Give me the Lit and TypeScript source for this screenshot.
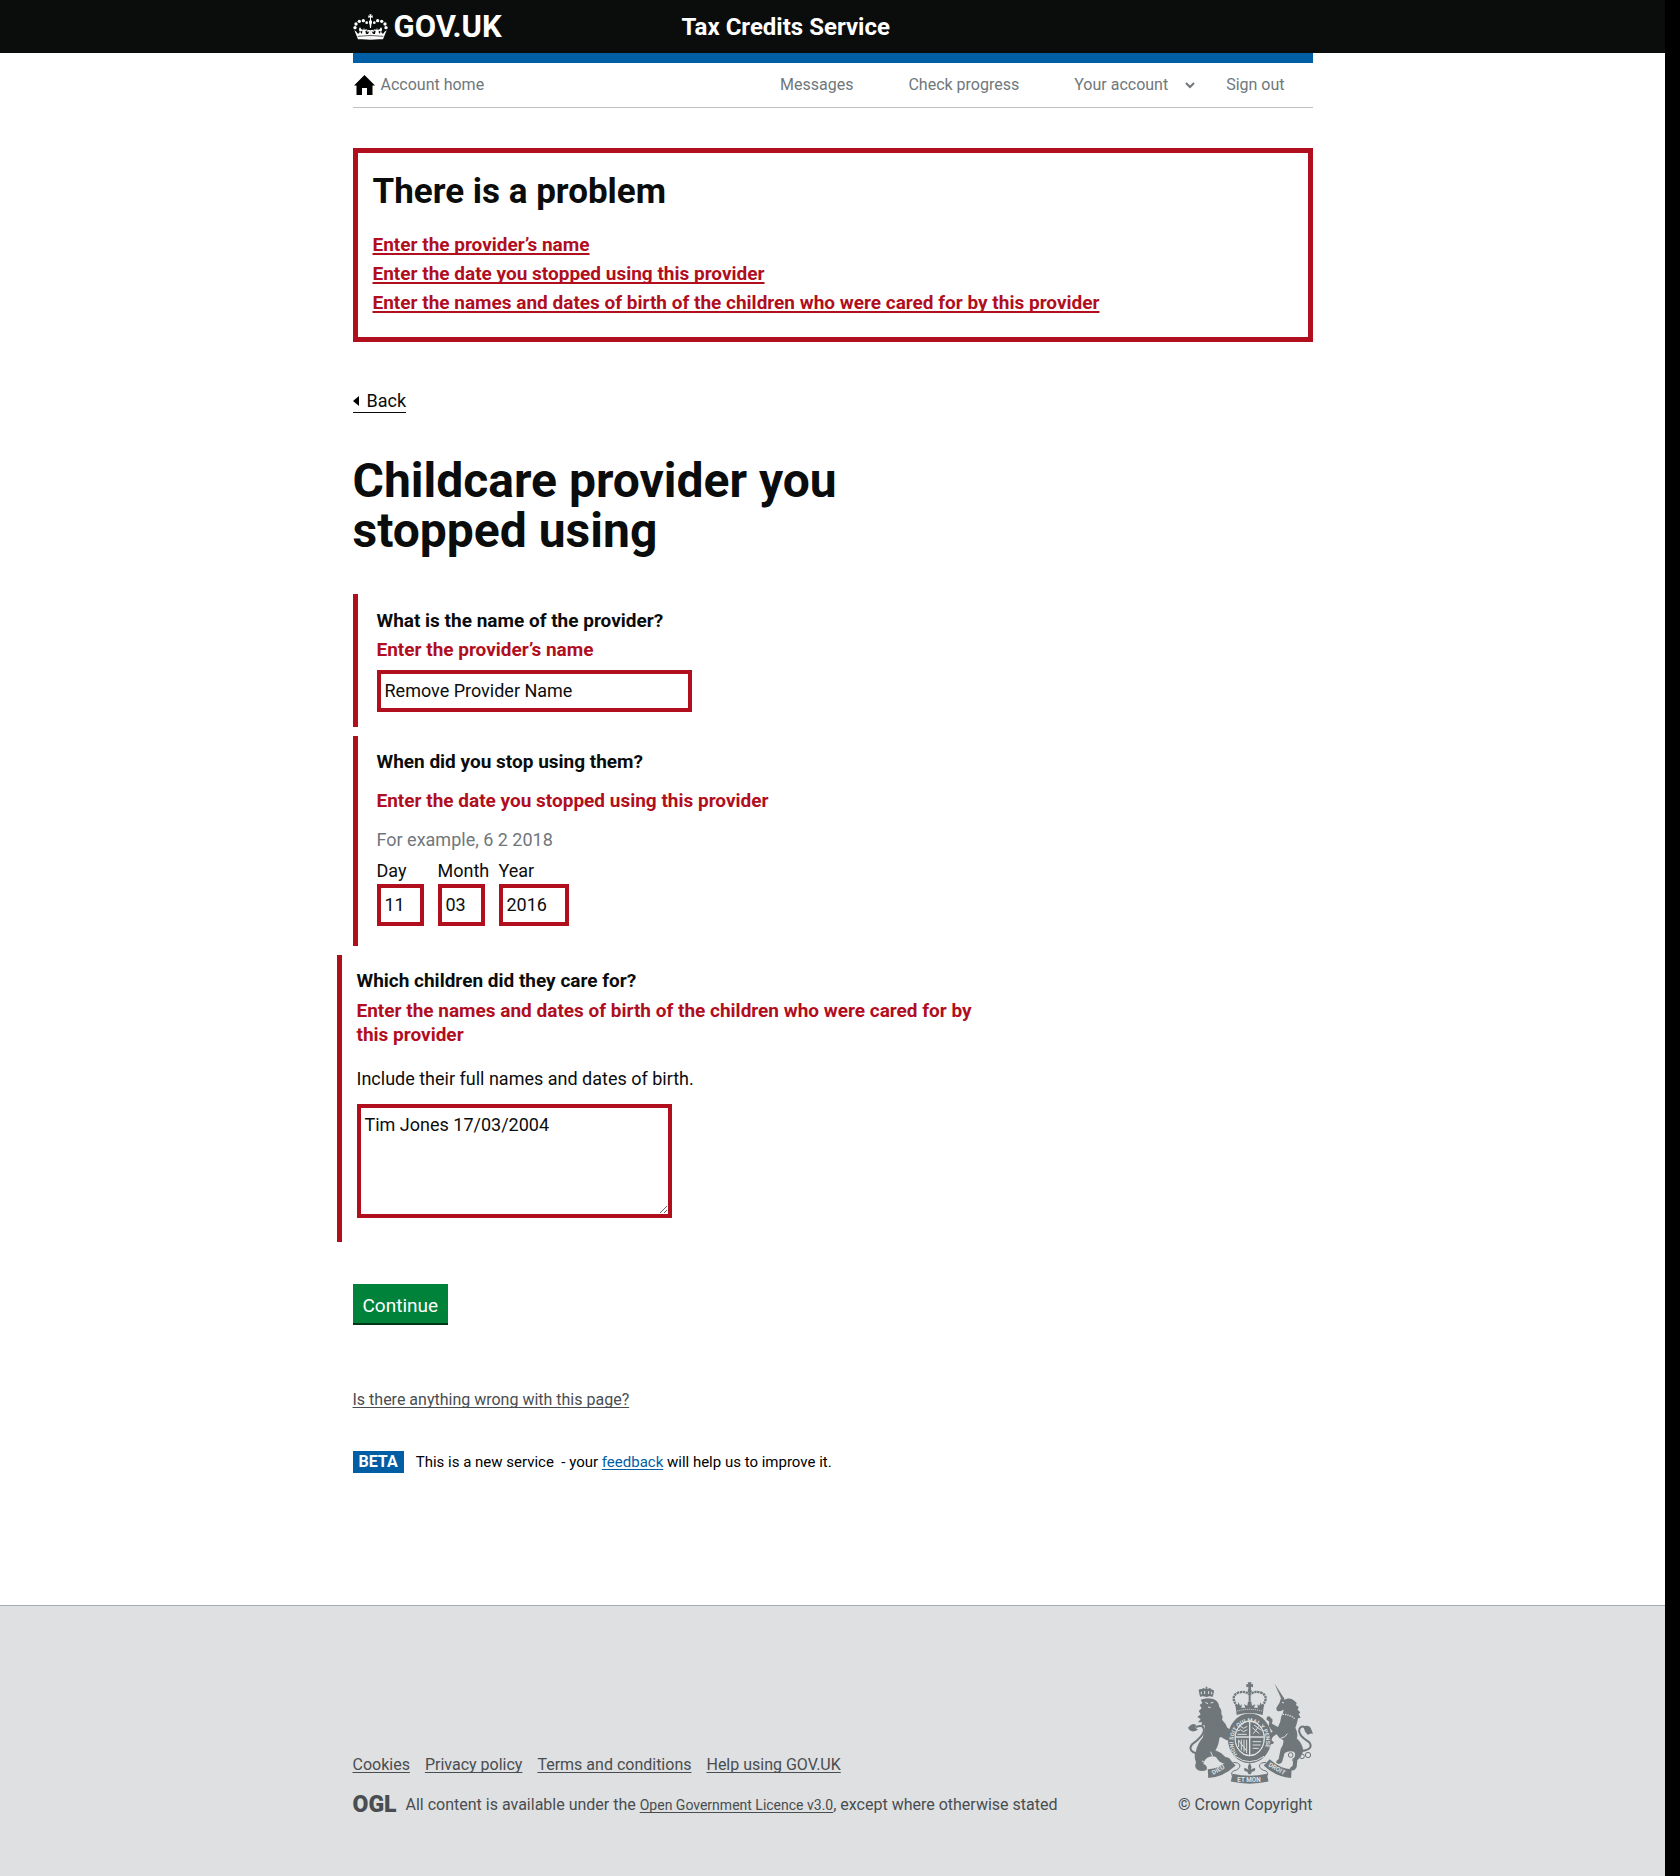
import { LitElement, html, svg, css } from "lit";
import { customElement, state } from "lit/decorators.js";

const providerNameError = "Enter the provider’s name";
const dateError = "Enter the date you stopped using this provider";
const childrenError =
  "Enter the names and dates of birth of the children who were cared for by this provider";

const errors = [
  { href: "#provider-name", text: providerNameError },
  { href: "#day", text: dateError },
  { href: "#children", text: childrenError },
];

const dateParts = [
  { id: "day", label: "Day", value: "11", size: "short" },
  { id: "month", label: "Month", value: "03", size: "short" },
  { id: "year", label: "Year", value: "2016", size: "long" },
];

const footerLinks = ["Cookies", "Privacy policy", "Terms and conditions", "Help using GOV.UK"];

/* Each half of the crown is drawn once and mirrored about its centre line. */
const crownHalf = svg`
  <circle cx="45" cy="79" r="5"/><circle cx="48" cy="68" r="5"/>
  <circle cx="58" cy="60" r="5"/><circle cx="70" cy="58" r="5"/>
  <circle cx="80" cy="64" r="4"/>
  <path d="M43 87 Q50 90 54 98 L60 92 Q54 84 60 78 Q66 84 61 92 L66 98 L67 88 L63 90 V83 L70 86 L72 79 L74 86 L80 83 V90 L76 88 L78 98 L84 98 L88 90 L82 93 V85 L92 87 V115 Q70 113 54 114 Z"/>`;

const crown = html`
  <svg class="crown" viewBox="39 38 105 78" aria-hidden="true">
    <g fill="#fff">
      <path d="M88 39 H95 L93 44 L98 42 V50 L93 48 V56 L96 60 Q97 66 94 70 L93 80 H90 L89 70 Q86 66 87 60 L90 56 V48 L85 50 V42 L90 44 Z"/>
      ${crownHalf}
      <g transform="matrix(-1 0 0 1 183 0)">${crownHalf}</g>
    </g>
    <path d="M53 105 Q91 100 130 105" fill="none" stroke="#0b0c0c" stroke-width="2"/>
  </svg>`;

const home = html`
  <svg class="home" viewBox="0 0 21 20" aria-hidden="true">
    <path d="M10.500 0 L21 10.500 H18.500 V20 H13 V13 H8 V20 H2.500 V10.500 H0 Z"/>
  </svg>`;

const chevron = html`
  <svg class="chevron" viewBox="0 0 10 7" aria-hidden="true">
    <path d="M1 1 L5 5 L9 1" fill="none" stroke="#6f777b" stroke-width="2"/>
  </svg>`;

const backArrow = html`
  <svg class="arrow" viewBox="0 0 6 10" aria-hidden="true"><path d="M6 0 V10 L0 5 Z"/></svg>`;

const royalArms = html`
  <svg class="arms" viewBox="24 18 375 309" aria-hidden="true">
    <g fill="#6f777b">
      <!-- lion -->
      <path d="M80 66 Q70 62 60 65 L56 46 Q59 40 64 43 L70 39 L77 42 V35 H82 V42 L90 39 L96 44 Q103 43 102 50 L98 66 Q90 62 80 66 Z"/>
      <path d="M62 74 Q79 66 100 72 Q116 78 118 96 Q126 104 124 118 Q130 124 126 134 Q138 146 142 158 Q156 164 155 176 L150 190 L138 183 Q126 178 118 190 Q116 212 106 226 Q124 232 136 246 Q152 248 152 258 Q146 270 134 266 Q118 264 108 246 Q94 240 82 248 Q72 254 70 266 Q84 272 80 284 Q66 292 52 284 Q42 278 48 262 Q40 244 48 228 Q52 206 68 188 Q76 170 74 150 L64 154 L66 142 L54 142 L62 132 L52 126 L62 118 L56 108 L65 100 L59 90 L67 84 Z"/>
      <path d="M118 148 Q140 160 152 176 L158 196 L140 196 L112 180 Z"/>
      <path d="M24 158 Q36 142 48 150 Q44 160 54 164 Q40 172 34 168 Q28 168 24 158 Z"/>
      <!-- unicorn -->
      <path d="M283 25 L311 68 L304 72 Z"/>
      <path d="M302 72 L310 66 L314 74 Q330 66 344 78 L350 84 L348 90 L356 96 L353 104 L361 112 L356 118 L362 128 L354 130 Q350 150 346 158 Q356 176 350 190 Q366 204 370 226 Q366 244 352 256 L350 276 Q342 292 328 284 Q330 276 338 272 L340 252 Q350 240 342 230 Q326 226 314 234 L306 262 Q296 272 288 262 Q290 256 296 252 L302 222 Q312 210 310 196 Q296 190 290 178 Q276 184 274 196 L282 202 Q278 212 268 204 L262 190 Q266 176 278 170 L266 154 L268 140 L260 134 Q258 124 268 124 L278 134 L276 146 L294 156 Q302 142 304 124 Q312 112 310 104 Q300 110 292 108 Q286 102 292 94 Q300 84 302 72 Z"/>
      <path d="M370 156 Q384 148 392 158 L399 176 Q388 174 384 180 Q374 172 370 156 Z"/>
      <!-- crown -->
      <path d="M203 22 H215 L213 28 L219 27 V37 L213 35 V42 Q218 48 212 54 V80 H206 V54 Q200 48 205 42 V35 L199 37 V27 L205 28 Z"/>
      <path d="M166 88 L172 92 L176 82 L180 92 L186 88 L184 98 H196 L192 88 L202 92 L204 80 H214 L216 92 L226 88 L222 98 H234 L232 88 L238 92 L242 82 L246 92 L252 88 L248 120 Q209 108 170 120 Z"/>
      <path d="M209 264 Q218 276 212 284 L224 278 Q230 288 216 290 L212 298 H206 L202 290 Q188 288 194 278 L206 284 Q200 276 209 264 Z"/>
    </g>
    <g fill="none" stroke="#6f777b">
      <!-- tails and crown arches -->
      <path stroke-width="6" d="M52 236 Q22 228 36 208 Q70 184 72 166 Q70 146 48 156"/>
      <path stroke-width="6" d="M366 228 Q402 222 388 202 Q352 180 358 162 Q366 148 380 160"/>
      <path stroke-width="7" stroke-dasharray="7 2" d="M172 94 Q150 66 172 54 Q194 46 207 58 M246 94 Q268 66 246 54 Q224 46 211 58"/>
      <ellipse cx="209" cy="190" rx="55" ry="64" stroke-width="21"/>
      <g stroke-width="3">
        <circle cx="332" cy="240" r="7"/><circle cx="344" cy="255" r="6"/>
        <circle cx="366" cy="244" r="7"/><circle cx="384" cy="240" r="8"/>
      </g>
      <!-- ribbon -->
      <path stroke-width="3" d="M160 262 Q176 262 180 270 Q180 284 160 288 Q152 292 156 302 M258 262 Q242 262 238 270 Q238 284 258 288 Q266 292 262 302"/>
      <path stroke-width="26" d="M84 296 Q124 294 158 262"/>
      <path stroke-width="26" d="M334 296 Q294 294 260 262"/>
      <path stroke-width="24" d="M155 308 Q209 320 263 308"/>
    </g>
    <ellipse cx="209" cy="190" rx="42" ry="50" fill="#6f777b"/>
    <g fill="none" stroke="#dee0e2">
      <ellipse cx="209" cy="190" rx="44" ry="52" stroke-width="3"/>
      <path stroke-width="4" d="M209 140 V240 M167 186 H251"/>
      <path stroke-width="3" d="M174 158 L182 154 L190 160 L202 154 M172 168 L182 164 L190 170 L202 164 M172 178 H200 M217 158 L238 176 M222 150 L244 166 M236 154 L220 176 M218 200 H244 M218 210 H242 M218 220 H236 M176 194 V216 M184 194 V226 M192 194 V230 M200 194 V234 M176 196 L200 228"/>
      <path stroke-width="3" stroke-dasharray="3 3" d="M172 108 Q209 98 246 108"/>
      <path stroke-width="3" d="M76 82 L84 86 M92 84 L100 82 M84 96 L92 98 M64 50 V58 M74 48 V57 M86 48 V57 M95 50 V58"/>
      <path stroke-width="4" stroke-dasharray="4 3" d="M308 118 Q330 118 346 132"/>
      <path stroke-width="3" d="M306 82 L312 84 M74 262 L66 258 M98 244 L92 230 M302 190 Q316 188 322 176"/>
      <path stroke-width="3" d="M166 244 Q209 276 252 244"/>
    </g>
    <g fill="#dee0e2" class="motto">
      <path id="garter" fill="none" d="M172 238 A49 58 0 1 1 246 238"/>
      <text class="small"><textPath href="#garter">HONI SOIT QUI MAL Y PENSE</textPath></text>
      <text x="100" y="300" transform="rotate(-30 100 300)">DIEU</text>
      <text x="172" y="321">ET MON</text>
      <text x="264" y="273" transform="rotate(30 264 273)">DROIT</text>
    </g>
  </svg>`;

@customElement("app-root")
export class AppRoot extends LitElement {
  @state() private providerName = "Remove Provider Name";
  @state() private childDetails = "Tim Jones 17/03/2004";

  static styles = css`
    :host {
      display: grid;
      grid-template-columns: minmax(0, 1fr) 15px;
      min-height: 100vh;
      background: #000;
      color: #0b0c0c;
      font-family: Roboto, "Liberation Sans", sans-serif;
      font-size: 18px;
      line-height: 24px;
    }
    * { box-sizing: border-box; }
    h1, h2, p, ul { margin: 0; padding: 0; }
    ul { list-style: none; }
    svg { display: block; flex: none; }
    a { color: inherit; text-decoration-skip-ink: none; text-underline-offset: 2px; }

    .page { display: flex; flex-direction: column; background: #fff; }
    .wrap { width: 100%; max-width: 960px; margin: 0 auto; }

    .header { background: #0b0c0c; color: #fff; }
    .header .wrap { display: grid; grid-template-columns: 329px 1fr; align-items: center; height: 53px; }
    .header a { color: #fff; text-decoration: none; font-weight: 700; }
    .logo { display: flex; align-items: center; gap: 6px; font-size: 31px; }
    .crown { width: 35px; height: 26px; }
    .service { font-size: 24px; }

    .nav {
      display: flex; align-items: center; gap: 55px;
      height: 55px; padding-right: 28px;
      border-top: 10px solid #005ea5; border-bottom: 1px solid #bfc1c3;
      font-size: 16px; color: #6f777b;
    }
    .nav a { text-decoration: none; }
    .account-home { display: flex; align-items: center; gap: 6px; margin-right: auto; padding-left: 1px; }
    .home { width: 21px; height: 20px; fill: #000; }
    .menu { display: flex; align-items: center; gap: 17px; margin-right: -24px; }
    .chevron { width: 10px; height: 7px; }

    .summary { margin-top: 40px; padding: 16px 15px 22px; border: 5px solid #b10e1e; }
    .summary h2 { margin-bottom: 19px; font-size: 35px; line-height: 45px; }
    .summary ul { display: grid; gap: 5px; }
    .summary a { color: #b10e1e; font-size: 19px; font-weight: 700; text-decoration-thickness: 2px; }

    .back {
      display: inline-flex; align-items: center; gap: 8px;
      margin-top: 49px; padding-bottom: 1px;
      border-bottom: 1px solid #0b0c0c;
      line-height: 20px; text-decoration: none;
    }
    .arrow { width: 6px; height: 10px; }
    h1 { max-width: 640px; margin: 43px 0 38px; font-size: 48px; line-height: 50px; }

    .group { max-width: 640px; margin-bottom: 9px; border-left: 5px solid #b10e1e; padding: 15px 0 15px 19px; }
    .label, .error { display: block; font-size: 19px; font-weight: 700; }
    .error { color: #b10e1e; margin-top: 5px; }
    .date { padding: 14px 0 20px 19px; }
    .date .error, .date .hint { margin-top: 15px; }
    .hint { color: #6f777b; }
    .box {
      display: block; border: 4px solid #b10e1e; border-radius: 0; background: #fff;
      padding: 5px 4px; color: #0b0c0c; font: inherit; outline: 0;
    }
    input.box { height: 42px; margin-top: 8px; padding: 4px 4px 6px; }
    .wide { width: 315px; }
    .parts { display: flex; gap: 14px; margin-top: 7px; }
    .part { display: flex; flex-direction: column; gap: 1px; }
    .part input.box { margin: 0; }
    .part.short, .short .box { width: 47px; }
    .long .box { width: 70px; }
    .children { margin: 0 0 42px -16px; padding: 14px 0 24px 15px; }
    .children .error { margin-top: 6px; }
    .children .note { margin: 20px 0 13px; }
    .area { height: 114px; resize: both; }

    .continue {
      display: block; border: 0; padding: 10px 10px 5px; margin-bottom: 67px;
      background: #00823b; box-shadow: 0 2px 0 #003618; color: #fff;
      font: inherit; font-size: 19px; cursor: pointer;
    }
    .report { display: block; width: fit-content; font-size: 16px; line-height: 20px; color: #494d50; }
    .phase { display: flex; align-items: center; gap: 12px; margin: 41px 0 132px; font-size: 15px; line-height: 22px; color: #000; }
    .tag { padding: 0 6px; background: #005ea5; color: #fff; font-size: 16px; font-weight: 700; }
    .phase a { color: #005ea5; }

    .footer { flex: 1; border-top: 1px solid #a1acb2; background: #dee0e2; color: #494d50; font-size: 16px; line-height: 20px; }
    .footer .wrap { display: flex; justify-content: space-between; align-items: flex-end; padding: 75px 0 62px; }
    .links { display: flex; gap: 15px; margin-bottom: 20px; }
    .licence { display: flex; gap: 9px; }
    .licence a { font-size: 14px; }
    .ogl { font-size: 23px; font-weight: 900; }
    .copyright { display: flex; flex-direction: column; align-items: flex-end; gap: 11px; text-decoration: none; }
    .arms { width: 125px; height: 103px; }
    .motto { font-size: 19px; font-weight: 700; }
    .motto .small { font-size: 17px; }
  `;

  render() {
    return html`
      <div class="page">
        <header class="header">
          <div class="wrap">
            <a class="logo" href="#">${crown}<span>GOV.UK</span></a>
            <a class="service" href="#">Tax Credits Service</a>
          </div>
        </header>
        <div class="wrap">
          <nav class="nav" aria-label="Account">
            <a class="account-home" href="#">${home}<span>Account home</span></a>
            <a href="#">Messages</a>
            <a href="#">Check progress</a>
            <a class="menu" href="#">Your account ${chevron}</a>
            <a href="#">Sign out</a>
          </nav>
          <main>
            <section class="summary" aria-labelledby="problem">
              <h2 id="problem">There is a problem</h2>
              <ul>${errors.map((e) => html`<li><a href=${e.href}>${e.text}</a></li>`)}</ul>
            </section>
            <a class="back" href="#">${backArrow}Back</a>
            <h1>Childcare provider you stopped using</h1>
            <form @submit=${(e: Event) => e.preventDefault()}>
              <div class="group">
                <label for="provider-name">
                  <span class="label">What is the name of the provider?</span>
                  <span class="error">${providerNameError}</span>
                </label>
                <input class="box wide" id="provider-name" type="text" .value=${this.providerName}>
              </div>
              <div class="group date" role="group" aria-labelledby="date-label">
                <span class="label" id="date-label">When did you stop using them?</span>
                <span class="error">${dateError}</span>
                <p class="hint">For example, 6 2 2018</p>
                <div class="parts">
                  ${dateParts.map(
                    (p) => html`<div class="part ${p.size}">
                      <label for=${p.id}>${p.label}</label>
                      <input class="box" id=${p.id} type="text" inputmode="numeric" .value=${p.value}>
                    </div>`
                  )}
                </div>
              </div>
              <div class="group children">
                <label for="children">
                  <span class="label">Which children did they care for?</span>
                  <span class="error">${childrenError}</span>
                </label>
                <p class="note">Include their full names and dates of birth.</p>
                <textarea class="box wide area" id="children" .value=${this.childDetails}></textarea>
              </div>
              <button class="continue" type="submit">Continue</button>
            </form>
            <a class="report" href="#">Is there anything wrong with this page?</a>
            <div class="phase">
              <strong class="tag">BETA</strong>
              <span>This is a new service&nbsp; - your <a href="#">feedback</a> will help us to improve it.</span>
            </div>
          </main>
        </div>
        <footer class="footer">
          <div class="wrap">
            <div>
              <ul class="links">${footerLinks.map((t) => html`<li><a href="#">${t}</a></li>`)}</ul>
              <div class="licence">
                <span class="ogl">OGL</span>
                <span>All content is available under the <a href="#">Open Government Licence v3.0</a>, except where otherwise stated</span>
              </div>
            </div>
            <a class="copyright" href="#">${royalArms}<span>© Crown Copyright</span></a>
          </div>
        </footer>
      </div>
    `;
  }
}
